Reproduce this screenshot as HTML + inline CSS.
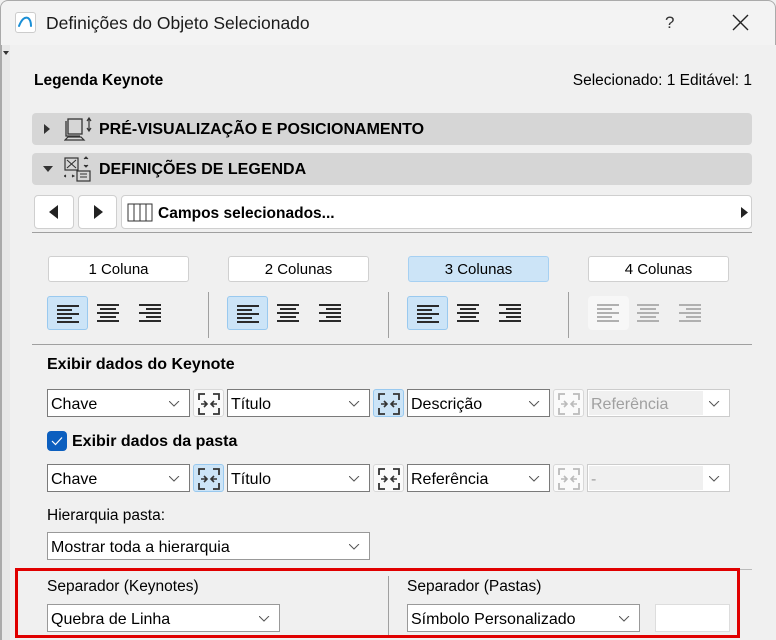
<!DOCTYPE html>
<html><head><meta charset="utf-8"><style>
*{box-sizing:border-box;margin:0;padding:0}
body{width:776px;height:640px;overflow:hidden;background:#f0f0f0;font-family:"Liberation Sans",sans-serif;color:#000;position:relative;font-size:15px}
.a{position:absolute}
.b{font-weight:bold}
.hdr{position:absolute;left:32px;width:720px;height:32px;background:#d6d6d6;border-radius:4px}
.hdr span{position:absolute;left:67px;top:8px;font-weight:bold;font-size:16px}
.btn{position:absolute;background:#fff;border:1px solid #cfcfcf;border-radius:4px}
.col{position:absolute;top:256px;width:141px;height:26px;background:#fff;border:1px solid #d0d0d0;border-radius:3px;text-align:center;font-size:15px;line-height:26px}
.col.sel{background:#cce4f7;border-color:#a6d0f2}
.al{position:absolute;top:296px;width:41px;height:34px;border-radius:3px}
.al.sel{background:#cce4f7;border:1px solid #99c9ef}
.al svg{position:absolute;left:9px;top:8px}
.vl{position:absolute;width:1px;background:#a0a0a0}
.hl{position:absolute;height:1px;background:#a0a0a0}
.sl{position:absolute;height:28px;background:#fff;border:1px solid #7a7a7a;font-size:16px;line-height:29px;padding-left:3px}
.sl svg{position:absolute;right:9px;top:11px}
.sl.dis{border-color:#ccc;color:#a0a0a0;background:#fff}
.sl.dis i{position:absolute;left:1px;top:1px;bottom:1px;right:26px;background:#f0f0f0}
.sl.dis b{position:relative;font-weight:normal}
.lk{position:absolute;width:31px;height:28px;border:1px solid #d8d8d8;border-radius:3px;background:#fafafa}
.lk.sel{background:#cce4f7;border-color:#99c9ef}
.lk svg{position:absolute;left:4px;top:3px}
</style></head><body>
<div class="a" style="left:0;top:0;width:776px;height:45px;background:#f3f3f3;border-top:1px solid #aaa;border-left:1px solid #aaa;border-right:1px solid #aaa;border-radius:8px 8px 0 0"></div>
<div class="a" style="left:15px;top:12px;width:21px;height:21px;background:#fff;border:1px solid #ccc;border-radius:3px">
<svg width="21" height="21" viewBox="0 0 21 21" class="a" style="left:-1px;top:-1px"><path d="M4 14 Q8 4 13 6 Q16 8 16 14" fill="none" stroke="#1a8fd6" stroke-width="2" stroke-linecap="round"/></svg></div>
<div class="a" style="left:46px;top:13px;font-size:17.5px;color:#1a1a1a">Definições do Objeto Selecionado</div>
<div class="a" style="left:665px;top:13px;font-size:17px;color:#333">?</div>
<svg class="a" style="left:732px;top:14px" width="17" height="17"><path d="M1 1L16 16M16 1L1 16" stroke="#222" stroke-width="1.4"/></svg>
<div class="a" style="left:0;top:45px;width:10px;height:595px;background:#e8e8e8;border-left:2px solid #aaa"></div>
<svg class="a" style="left:3px;top:51px" width="6" height="5"><path d="M0 0H6L3 4Z" fill="#333"/></svg>

<div class="a b" style="left:34px;top:72px;font-size:15.5px">Legenda Keynote</div>
<div class="a" style="right:24px;top:72px;font-size:15.5px">Selecionado: 1 Editável: 1</div>

<div class="hdr" style="top:113px"><svg class="a" style="left:12px;top:11px" width="6" height="10"><path d="M0 0L6 5L0 10Z" fill="#333"/></svg>
<svg class="a" style="left:32px;top:3px" width="30" height="26"><rect x="4" y="3" width="14" height="15" fill="none" stroke="#333" stroke-width="1.3"/><path d="M2 5V20H16" fill="none" stroke="#333" stroke-width="1.3"/><path d="M1 24L4 21H17L20 24Z" fill="none" stroke="#333" stroke-width="1.2"/><path d="M25 3V14M23 5L25 2L27 5M23 12L25 15L27 12" fill="none" stroke="#333" stroke-width="1.2"/></svg>
<span>PRÉ-VISUALIZAÇÃO E POSICIONAMENTO</span></div>
<div class="hdr" style="top:153px"><svg class="a" style="left:11px;top:13px" width="10" height="6"><path d="M0 0H10L5 6Z" fill="#333"/></svg>
<svg class="a" style="left:32px;top:3px" width="30" height="28"><rect x="1" y="2" width="13" height="12" fill="none" stroke="#333" stroke-width="1.2"/><path d="M3 4L12 12M12 4L3 12" stroke="#333" stroke-width="1.1"/><rect x="13" y="15" width="13" height="10" fill="none" stroke="#333" stroke-width="1.2"/><path d="M16 18H23M16 21H23" stroke="#333"/><path d="M20 3L22 1L24 3M20 9L22 11L24 9M2 19L0 20L2 21M8 19L10 20L8 21" fill="#333" stroke="#333"/></svg>
<span>DEFINIÇÕES DE LEGENDA</span></div>

<div class="btn" style="left:34px;top:195px;width:40px;height:34px"><svg class="a" style="left:14px;top:9px" width="10" height="14"><path d="M9 0V14L0 7Z" fill="#222"/></svg></div>
<div class="btn" style="left:78px;top:195px;width:39px;height:34px"><svg class="a" style="left:15px;top:9px" width="10" height="14"><path d="M0 0V14L9 7Z" fill="#222"/></svg></div>
<div class="btn" style="left:121px;top:195px;width:631px;height:34px">
<svg class="a" style="left:5px;top:7px" width="26" height="19"><rect x="1" y="1" width="24" height="17" fill="none" stroke="#333"/><path d="M7 1V18M13 1V18M19 1V18" stroke="#333"/></svg>
<div class="a b" style="left:36px;top:9px;font-size:15.5px">Campos selecionados...</div>
<svg class="a" style="right:3px;top:11px" width="7" height="11"><path d="M0 0L7 5.5L0 11Z" fill="#222"/></svg></div>
<div class="hl" style="left:32px;top:232px;width:720px"></div>

<div class="col" style="left:48px">1 Coluna</div>
<div class="col" style="left:228px">2 Colunas</div>
<div class="col sel" style="left:408px">3 Colunas</div>
<div class="col" style="left:588px">4 Colunas</div>

<svg width="0" height="0" style="position:absolute"><defs>
<g id="L"><path d="M0 1H22M0 5H15M0 9H22M0 13H15M0 17H22" stroke="currentColor" stroke-width="2"/></g>
<g id="C"><path d="M0 1H22M3 5H19M0 9H22M3 13H19M0 17H22" stroke="currentColor" stroke-width="2"/></g>
<g id="R"><path d="M0 1H22M7 5H22M0 9H22M7 13H22M0 17H22" stroke="currentColor" stroke-width="2"/></g>
<g id="K"><path d="M1 7V1H7M15 1H21V7M1 15V21H7M15 21H21V15" fill="none" stroke="currentColor" stroke-width="1.8"/><path d="M3 11H9M6 8L9 11L6 14M19 11H13M16 8L13 11L16 14" fill="none" stroke="currentColor" stroke-width="1.6"/></g>
<g id="V"><path d="M0 0L5 5L10 0" fill="none" stroke="#555" stroke-width="1"/></g>
</defs></svg>

<div class="al sel" style="left:47px"><svg width="22" height="18" style="color:#2a2a2a"><use href="#L"/></svg></div>
<div class="al" style="left:88px"><svg width="22" height="18" style="color:#2a2a2a"><use href="#C"/></svg></div>
<div class="al" style="left:130px"><svg width="22" height="18" style="color:#2a2a2a"><use href="#R"/></svg></div>
<div class="vl" style="left:208px;top:292px;height:46px"></div>
<div class="al sel" style="left:227px"><svg width="22" height="18" style="color:#2a2a2a"><use href="#L"/></svg></div>
<div class="al" style="left:268px"><svg width="22" height="18" style="color:#2a2a2a"><use href="#C"/></svg></div>
<div class="al" style="left:310px"><svg width="22" height="18" style="color:#2a2a2a"><use href="#R"/></svg></div>
<div class="vl" style="left:388px;top:292px;height:46px"></div>
<div class="al sel" style="left:407px"><svg width="22" height="18" style="color:#2a2a2a"><use href="#L"/></svg></div>
<div class="al" style="left:448px"><svg width="22" height="18" style="color:#2a2a2a"><use href="#C"/></svg></div>
<div class="al" style="left:490px"><svg width="22" height="18" style="color:#2a2a2a"><use href="#R"/></svg></div>
<div class="vl" style="left:568px;top:292px;height:46px"></div>
<div class="al" style="left:588px;background:#f7f7f7;border-radius:4px"><svg width="22" height="18" style="color:#b0b0b0"><use href="#L"/></svg></div>
<div class="al" style="left:628px"><svg width="22" height="18" style="color:#b0b0b0"><use href="#C"/></svg></div>
<div class="al" style="left:670px"><svg width="22" height="18" style="color:#b0b0b0"><use href="#R"/></svg></div>
<div class="hl" style="left:32px;top:344px;width:720px"></div>

<div class="a b" style="left:47px;top:356px;font-size:16px">Exibir dados do Keynote</div>
<div class="sl" style="left:47px;top:389px;width:143px">Chave<svg width="11" height="6"><use href="#V"/></svg></div>
<div class="lk" style="left:193px;top:389px;color:#333"><svg width="22" height="22"><use href="#K"/></svg></div>
<div class="sl" style="left:227px;top:389px;width:143px">Título<svg width="11" height="6"><use href="#V"/></svg></div>
<div class="lk sel" style="left:373px;top:389px;color:#333"><svg width="22" height="22"><use href="#K"/></svg></div>
<div class="sl" style="left:407px;top:389px;width:143px">Descrição<svg width="11" height="6"><use href="#V"/></svg></div>
<div class="lk" style="left:553px;top:389px;color:#bbb"><svg width="22" height="22"><use href="#K"/></svg></div>
<div class="sl dis" style="left:587px;top:389px;width:143px"><i></i><b>Referência</b><svg width="11" height="6"><use href="#V"/></svg></div>

<div class="a" style="left:47px;top:431px;width:20px;height:20px;background:#0c5fbf;border-radius:4px"><svg class="a" style="left:4px;top:5px" width="12" height="10"><path d="M1 5L4.5 8.5L11 1.5" fill="none" stroke="#fff" stroke-width="1.2"/></svg></div>
<div class="a b" style="left:72px;top:433px;font-size:16px">Exibir dados da pasta</div>
<div class="sl" style="left:47px;top:464px;width:143px">Chave<svg width="11" height="6"><use href="#V"/></svg></div>
<div class="lk sel" style="left:193px;top:464px;color:#333"><svg width="22" height="22"><use href="#K"/></svg></div>
<div class="sl" style="left:227px;top:464px;width:143px">Título<svg width="11" height="6"><use href="#V"/></svg></div>
<div class="lk" style="left:373px;top:464px;color:#333"><svg width="22" height="22"><use href="#K"/></svg></div>
<div class="sl" style="left:407px;top:464px;width:143px">Referência<svg width="11" height="6"><use href="#V"/></svg></div>
<div class="lk" style="left:553px;top:464px;color:#bbb"><svg width="22" height="22"><use href="#K"/></svg></div>
<div class="sl dis" style="left:587px;top:464px;width:143px"><i></i><b>-</b><svg width="11" height="6"><use href="#V"/></svg></div>

<div class="a" style="left:47px;top:507px;font-size:15.5px">Hierarquia pasta:</div>
<div class="sl" style="left:47px;top:532px;width:323px;border-color:#999">Mostrar toda a hierarquia<svg width="11" height="6"><use href="#V"/></svg></div>

<div class="hl" style="left:32px;top:569px;width:720px;background:#bbb"></div>
<div class="a" style="left:47px;top:578px;font-size:15.5px">Separador (Keynotes)</div>
<div class="vl" style="left:388px;top:576px;height:60px"></div>
<div class="a" style="left:407px;top:578px;font-size:15.5px">Separador (Pastas)</div>
<div class="sl" style="left:47px;top:604px;width:233px;border-color:#999">Quebra de Linha<svg width="11" height="6"><use href="#V"/></svg></div>
<div class="sl" style="left:407px;top:604px;width:233px;border-color:#999">Símbolo Personalizado<svg width="11" height="6"><use href="#V"/></svg></div>
<div class="a" style="left:655px;top:604px;width:75px;height:28px;background:#fff;border:1px solid #ddd"></div>
<div class="a" style="left:15px;top:568px;width:725px;height:70px;border:3px solid #e00000"></div>
</body></html>
